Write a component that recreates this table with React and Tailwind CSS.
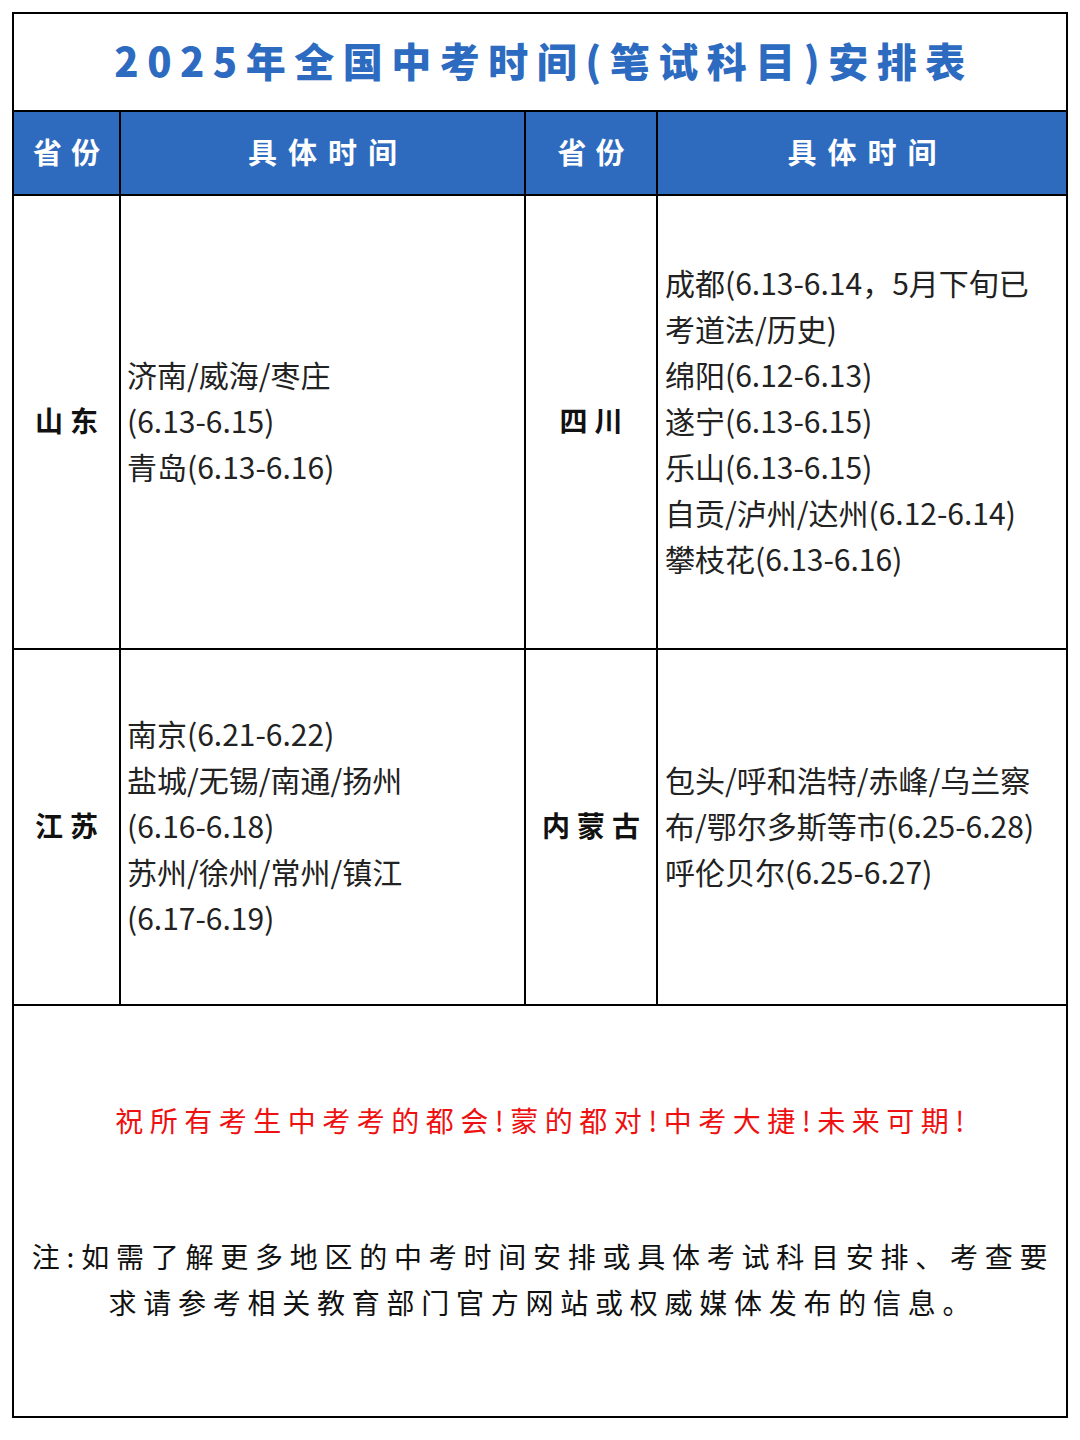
import React from "react";

const rows = [
  {
    left: "山东",
    leftTimes: ["济南/威海/枣庄", "(6.13-6.15)", "青岛(6.13-6.16)"],
    right: "四川",
    rightTimes: [
      "成都(6.13-6.14，5月下旬已",
      "考道法/历史)",
      "绵阳(6.12-6.13)",
      "遂宁(6.13-6.15)",
      "乐山(6.13-6.15)",
      "自贡/泸州/达州(6.12-6.14)",
      "攀枝花(6.13-6.16)",
    ],
  },
  {
    left: "江苏",
    leftTimes: [
      "南京(6.21-6.22)",
      "盐城/无锡/南通/扬州",
      "(6.16-6.18)",
      "苏州/徐州/常州/镇江",
      "(6.17-6.19)",
    ],
    right: "内蒙古",
    rightTimes: [
      "包头/呼和浩特/赤峰/乌兰察",
      "布/鄂尔多斯等市(6.25-6.28)",
      "呼伦贝尔(6.25-6.27)",
    ],
  },
];

const Province = ({ name }) => (
  <div className="flex items-center justify-center border-b-2 border-r-2 border-black text-[28px] font-bold tracking-[7px] pl-[7px] pb-[4px] text-[#111]">
    {name}
  </div>
);

const Times = ({ lines, last }) => (
  <div
    className={`flex flex-col justify-center border-b-2 border-black pb-[4px] text-[30px] leading-[46px] text-[#222] ${
      last ? "pl-[7px]" : "border-r-2 pl-[6px]"
    }`}
  >
    {lines.map((line) => (
      <div key={line} className="whitespace-nowrap">
        {line}
      </div>
    ))}
  </div>
);

const App = () => {
  return (
    <div className="w-[1080px] h-[1440px] bg-white p-3 font-['Noto_Sans_CJK_SC','Noto_Sans',sans-serif]">
      <div className="border-2 border-black">
        <div className="grid grid-cols-[107px_405px_132px_408px] grid-rows-[98px_84px_454px_356px]">
          {/* title */}
          <div className="col-span-4 flex items-center justify-center border-b-2 border-black text-[40px] font-black tracking-[8.5px] pl-[8px] pb-[4px] text-[#2c6bbf]">
            2025年全国中考时间(笔试科目)安排表
          </div>

          {/* header */}
          <div className="flex items-center justify-center bg-[#2e6bbe] border-b-2 border-r-2 border-black pb-[2px] text-white text-[29px] font-bold tracking-[9px] pl-[9px]">
            省份
          </div>
          <div className="flex items-center justify-center bg-[#2e6bbe] border-b-2 border-r-2 border-black pb-[2px] text-white text-[29px] font-bold tracking-[11px] pl-[11px]">
            具体时间
          </div>
          <div className="flex items-center justify-center bg-[#2e6bbe] border-b-2 border-r-2 border-black pb-[2px] text-white text-[29px] font-bold tracking-[9px] pl-[9px]">
            省份
          </div>
          <div className="flex items-center justify-center bg-[#2e6bbe] border-b-2 border-black pb-[2px] text-white text-[29px] font-bold tracking-[11px] pl-[11px]">
            具体时间
          </div>

          {/* rows */}
          {rows.map((row) => (
            <React.Fragment key={row.left}>
              <Province name={row.left} />
              <Times lines={row.leftTimes} />
              <Province name={row.right} />
              <Times lines={row.rightTimes} last />
            </React.Fragment>
          ))}
        </div>

        {/* footer */}
        <div className="h-[410px] flex flex-col justify-evenly items-center">
          <div className="text-[28px] leading-[46px] tracking-[6.5px] pl-[6px] text-[#ee1111]">
            祝所有考生中考考的都会!蒙的都对!中考大捷!未来可期!
          </div>
          <div className="flex flex-col items-center text-[28px] leading-[46px] tracking-[6.75px] pl-[6px] text-[#111]">
            <div className="whitespace-nowrap">
              注:如需了解更多地区的中考时间安排或具体考试科目安排、考查要
            </div>
            <div className="whitespace-nowrap">
              求请参考相关教育部门官方网站或权威媒体发布的信息。
            </div>
          </div>
        </div>
      </div>
    </div>
  );
};

export default App;
